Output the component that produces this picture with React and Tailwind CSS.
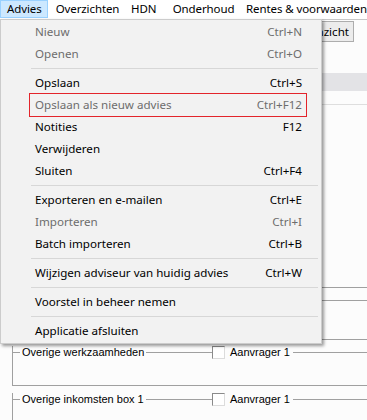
import React from "react";

const seg = { fontFamily: '"Noto Sans", "Open Sans", sans-serif' };
const ms = { fontFamily: '"Liberation Sans", Arial, sans-serif' };

const items = [
  { t: "Nieuw", k: "Ctrl+N", d: true },
  { t: "Openen", k: "Ctrl+O", d: true },
  "sep",
  { t: "Opslaan", k: "Ctrl+S" },
  { t: "Opslaan als nieuw advies", k: "Ctrl+F12", d: true, red: true },
  { t: "Notities", k: "F12" },
  { t: "Verwijderen", k: "" },
  { t: "Sluiten", k: "Ctrl+F4" },
  "sep",
  { t: "Exporteren en e-mailen", k: "Ctrl+E" },
  { t: "Importeren", k: "Ctrl+I", d: true },
  { t: "Batch importeren", k: "Ctrl+B" },
  "sep",
  { t: "Wijzigen adviseur van huidig advies", k: "Ctrl+W" },
  "sep",
  { t: "Voorstel in beheer nemen", k: "" },
  "sep",
  { t: "Applicatie afsluiten", k: "" },
];

function GroupBox({ title }) {
  return (
    <div className="ml-[12px] w-[400px] h-[40px] border-l border-b border-[#a0a0a0]">
      <div className="flex items-center h-[13px] -mt-[6px] text-[11px] text-black" style={ms}>
        <div className="flex items-center w-[200px] -ml-px">
          <div className="w-[8px] h-px bg-[#a0a0a0]" />
          <span className="ml-[2px] whitespace-nowrap leading-[13px]">{title}</span>
          <div className="flex-1 ml-[2px] h-px bg-[#a0a0a0]" />
        </div>
        <div className="w-[13px] h-[13px] bg-white border border-[#8a8a8a] border-r-[#dcdcdc] border-b-[#dcdcdc]" />
        <span className="ml-[5px] whitespace-nowrap leading-[13px]">Aanvrager 1</span>
        <div className="flex-1 ml-[3px] h-px bg-[#a0a0a0]" />
      </div>
    </div>
  );
}

export default function App() {
  return (
    <div className="relative w-[367px] h-[420px] overflow-hidden bg-[#fcfcfc]">
      {/* menu bar */}
      <div className="flex h-[19px] bg-white text-[11.5px] tracking-[-0.1px] text-black" style={seg}>
        <div className="w-[48px] h-[18px] pl-[6px] flex items-center bg-[#cce8ff] border border-[#99d1ff]">Advies</div>
        <div className="w-[77px] pl-[8px] flex items-center h-[18px] whitespace-nowrap">Overzichten</div>
        <div className="w-[41px] pl-[7px] flex items-center h-[18px]">HDN</div>
        <div className="w-[75px] pl-[8px] flex items-center h-[18px]">Onderhoud</div>
        <div className="pl-[7px] flex items-center h-[18px] whitespace-nowrap">Rentes &amp; voorwaarden</div>
      </div>
      {/* toolbar */}
      <div className="flex justify-end pr-[13px] pt-[1px] h-[28px] border-t border-[#c8c8c8]">
        <div className="w-[54px] h-[21px] pr-[4px] flex items-center justify-end bg-[#ececec] border border-[#adadad] text-[11.6px] text-black" style={seg}>
          nzicht
        </div>
      </div>
      <div className="h-[26px]" />
      <div className="h-[18px] bg-[#e3e3e6]" />
      <div className="h-[13px]" />
      <div className="h-px bg-[#dedede]" />
      <div className="h-[182px]" />
      <div className="h-px bg-[#a0a0a0]" />
      <div className="h-[12px]" />
      <div className="h-px bg-[#a0a0a0]" />
      <div className="h-[38px]" />
      <div className="h-px bg-[#a0a0a0]" />
      <div className="h-[12px]" />
      <GroupBox title="Overige werkzaamheden" />
      <div className="h-[13px]" />
      <GroupBox title="Overige inkomsten box 1" />

      {/* dropdown menu */}
      <div
        className="absolute left-0 top-[19px] w-[322px] pt-px pb-px bg-[#f2f2f2] border border-[#cccccc] shadow-[2px_2px_3px_rgba(0,0,0,0.4)] text-[11.6px]"
        style={seg}
      >
        {items.map((it, i) =>
          it === "sep" ? (
            <div key={i} className="h-[7px] pt-[3px]">
              <div className="ml-[30px] mr-[3px] h-px bg-[#d7d7d7]" />
            </div>
          ) : (
            <div
              key={i}
              className={`relative flex items-center justify-between h-[22px] pl-[34px] pr-[19px] whitespace-nowrap ${
                it.d ? "text-[#6d6d6d]" : "text-black"
              }`}
            >
              <span>{it.t}</span>
              <span>{it.k}</span>
              {it.red && (
                <div className="absolute left-[28px] w-[278px] -top-px -bottom-px border border-[#e3242b]" />
              )}
            </div>
          )
        )}
      </div>
    </div>
  );
}
